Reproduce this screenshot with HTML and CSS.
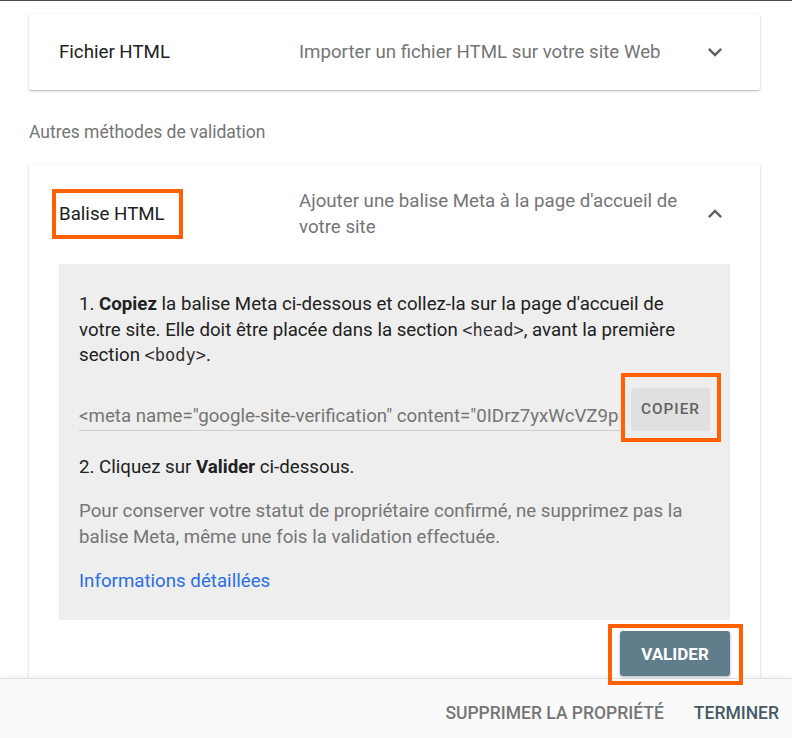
FILE: index.html
```html
<!DOCTYPE html>
<html lang="fr">
<head>
    <meta charset="UTF-8">
    <meta name="viewport" content="width=device-width, initial-scale=1.0">
    <title>Validation de la propriété</title>
    <link rel="stylesheet" href="styles.css">
</head>
<body>
    <div class="page">
        <main class="content">
            <div class="card">
                <div class="card-head">
                    <div class="method-title">Fichier HTML</div>
                    <div class="method-desc">Importer un fichier HTML sur votre site Web</div>
                    <svg class="chevron" viewBox="0 0 24 24"><path d="M16.59 8.59L12 13.17 7.41 8.59 6 10l6 6 6-6z"/></svg>
                </div>
            </div>

            <div class="section-label">Autres méthodes de validation</div>

            <div class="card">
                <div class="card-head">
                    <div class="method-title"><span class="mark mark-title">Balise HTML</span></div>
                    <div class="method-desc">Ajouter une balise Meta à la page d'accueil de votre site</div>
                    <svg class="chevron" viewBox="0 0 24 24"><path d="M7.41 15.41L12 10.83l4.59 4.58L18 14l-6-6-6 6z"/></svg>
                </div>

                <div class="panel">
                    <p class="step">1. <b>Copiez</b> la balise Meta ci-dessous et collez-la sur la page d'accueil de votre site. Elle doit être placée dans la section <code>&lt;head&gt;</code>, avant la première section <code>&lt;body&gt;</code>.</p>

                    <div class="copy-row">
                        <input class="tag-field" type="text" readonly value='&lt;meta name="google-site-verification" content="0IDrz7yxWcVZ9pHk4tQeLm2sNf8aRbXy" /&gt;'>
                        <span class="mark mark-copy"><button class="btn-copy">COPIER</button></span>
                    </div>

                    <p class="step step-two">2. Cliquez sur <b>Valider</b> ci-dessous.</p>

                    <p class="note">Pour conserver votre statut de propriétaire confirmé, ne supprimez pas la balise Meta, même une fois la validation effectuée.</p>

                    <a class="more" href="#">Informations détaillées</a>
                </div>

                <div class="actions">
                    <span class="mark mark-validate"><button class="btn-validate">VALIDER</button></span>
                </div>
            </div>
        </main>

        <footer class="footer">
            <button class="btn-text">SUPPRIMER LA PROPRIÉTÉ</button>
            <button class="btn-text btn-done">TERMINER</button>
        </footer>
    </div>
</body>
</html>
```

FILE: styles.css
```css
html, body {
    margin: 0;
    height: 100%;
}
body {
    font-family: Roboto, "Noto Sans", Arial, sans-serif;
    color: #212121;
    background: #fff;
}
.page {
    height: 738px;
    display: flex;
    flex-direction: column;
    border-top: 1px solid #4a4a4a;
    box-sizing: border-box;
    overflow: hidden;
}
.content {
    flex: 1;
    min-height: 0;
    padding: 13px 32px 0 29px;
}
.card {
    background: #fff;
    border-radius: 2px;
    box-shadow: 0 1px 3px rgba(0, 0, 0, 0.2), 0 1px 1px rgba(0, 0, 0, 0.12);
    margin-bottom: 20px;
}
.card-head {
    display: flex;
    align-items: center;
    padding: 24px 31px 24px 30px;
    font-size: 18.7px;
    line-height: 26px;
}
.method-title {
    width: 240px;
    flex-shrink: 0;
}
.method-desc {
    width: 401px;
    color: #757575;
}
.chevron {
    width: 28px;
    height: 28px;
    margin-left: auto;
    fill: #616161;
}
.section-label {
    font-size: 17.5px;
    line-height: 26px;
    color: #757575;
    margin: 29px 0 19px;
}

/* orange annotation frames */
.mark {
    display: inline-block;
    border: 4px solid #ff6000;
}
.mark-title {
    margin-left: -7px;
    padding: 8px 14px 8px 3px;
}
.mark-copy {
    padding: 11px 7px 7px 6px;
    margin-right: -11px;
    flex-shrink: 0;
}
.mark-validate {
    position: relative;
    z-index: 2;
    padding: 3px 9px 5px 8px;
    margin-right: -13px;
}

.panel {
    background: #eeeeee;
    margin: 0 30px;
    padding: 28px 20px 26px;
    font-size: 18.7px;
    line-height: 25.6px;
}
.step {
    margin: 0;
}
.step b {
    font-weight: 700;
}
code {
    font-family: "DejaVu Sans Mono", monospace;
    font-size: 17px;
    color: #333;
}
.copy-row {
    display: flex;
    align-items: flex-end;
    margin-top: 4px;
}
.tag-field {
    flex: 1;
    min-width: 0;
    height: 28px;
    margin: 0 1px 11px 0;
    padding: 0;
    border: none;
    border-bottom: 1px solid #cfcfcf;
    background: transparent;
    font-family: Roboto, Arial, sans-serif;
    font-size: 18.7px;
    color: #757575;
    outline: none;
}
.btn-copy {
    display: block;
    width: 79px;
    height: 43px;
    border: none;
    border-radius: 3px;
    background: #e0e0e0;
    color: #616161;
    font-family: Roboto, Arial, sans-serif;
    font-size: 15.3px;
    font-weight: 500;
    letter-spacing: 1px;
    cursor: pointer;
}
.step-two {
    margin-top: 13px;
}
.note {
    margin: 19px 0 18px;
    color: #757575;
}
.more {
    color: #2a6ee0;
    text-decoration: none;
}
.actions {
    display: flex;
    justify-content: flex-end;
    padding: 4px 30px 40px;
}
.btn-validate {
    display: block;
    width: 110px;
    height: 45px;
    border: none;
    border-radius: 3px;
    background: #607d8b;
    color: #fff;
    font-family: Roboto, Arial, sans-serif;
    font-size: 17px;
    font-weight: 700;
    box-shadow: 0 1px 3px rgba(0, 0, 0, 0.3);
    cursor: pointer;
}

.footer {
    position: relative;
    z-index: 1;
    height: 60px;
    flex-shrink: 0;
    box-sizing: border-box;
    display: flex;
    align-items: center;
    justify-content: flex-end;
    gap: 30px;
    padding: 9px 13px 0 0;
    background: #fafafa;
    border-top: 1px solid #e0e0e0;
    box-shadow: 0 -2px 4px rgba(0, 0, 0, 0.04);
}
.btn-text {
    border: none;
    background: none;
    padding: 0;
    font-family: Roboto, Arial, sans-serif;
    font-size: 17.5px;
    font-weight: 500;
    color: #757575;
    cursor: pointer;
}
.btn-done {
    color: #455a64;
}
```
